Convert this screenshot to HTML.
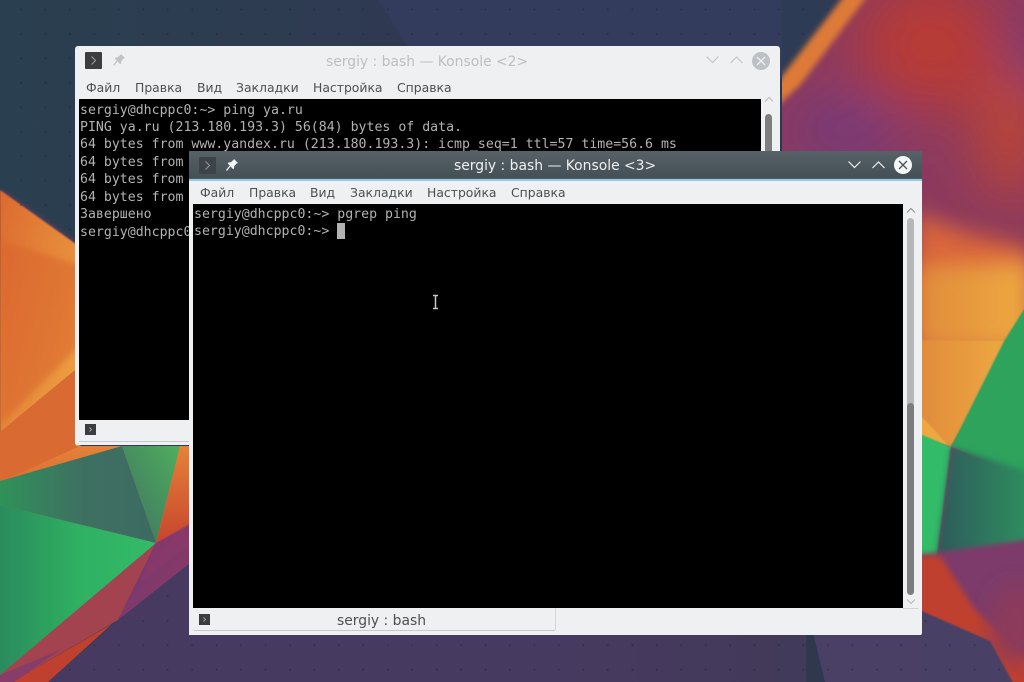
<!DOCTYPE html>
<html><head><meta charset="utf-8">
<style>
html,body{margin:0;padding:0;width:1024px;height:682px;overflow:hidden;background:#333a5a}
#bg{position:absolute;left:0;top:0}
.win{position:absolute;background:#eff0f1;overflow:hidden;filter:blur(.3px)}
.a{position:absolute;white-space:pre}
.m{font:12.4px/17px "DejaVu Sans",sans-serif;color:#4d4f50}
.t{font:13.23px/17.45px "DejaVu Sans Mono",monospace;color:#b2b2b2;white-space:pre;position:absolute}
.black{position:absolute;background:#000}
svg{position:absolute;overflow:visible}
</style></head><body>
<svg id="bg" width="1024" height="682" viewBox="0 0 1024 682" style="left:0;top:0">
<defs>
<linearGradient id="nv" x1="0" y1="0" x2="1" y2="0"><stop offset="0" stop-color="#2a3f50"/><stop offset=".4" stop-color="#2f3a52"/><stop offset=".8" stop-color="#2e3950"/></linearGradient>
<linearGradient id="org" x1="0" y1="0" x2="1" y2="1"><stop offset="0" stop-color="#dc6a30"/><stop offset=".6" stop-color="#e8913c"/><stop offset="1" stop-color="#f3ac48"/></linearGradient>
<linearGradient id="g1" x1="0" y1="0" x2="1" y2="0"><stop offset="0" stop-color="#2a8b5d"/><stop offset=".5" stop-color="#2fb062"/><stop offset="1" stop-color="#33bb68"/></linearGradient>
<linearGradient id="g2" x1="0" y1="0" x2="1" y2="0"><stop offset="0" stop-color="#2f9258"/><stop offset=".5" stop-color="#3e7162"/><stop offset="1" stop-color="#3d6a62"/></linearGradient>
<linearGradient id="g3" x1="1" y1="0" x2="0" y2="1"><stop offset="0" stop-color="#4fae5d"/><stop offset="1" stop-color="#3e6f62"/></linearGradient>
<linearGradient id="w" x1="0" y1="0" x2="0" y2="1"><stop offset="0" stop-color="#e58238"/><stop offset="1" stop-color="#c7452d"/></linearGradient>
<linearGradient id="dg" x1="0" y1="0" x2="1" y2="0"><stop offset="0" stop-color="#2f5a5c"/><stop offset="1" stop-color="#2f8f5e"/></linearGradient>
<linearGradient id="rp" x1="0" y1="0" x2="1" y2="1"><stop offset="0" stop-color="#693a80"/><stop offset="1" stop-color="#94385a"/></linearGradient>
<linearGradient id="ro" x1="0" y1="0" x2="1" y2="0"><stop offset="0" stop-color="#e08a3a"/><stop offset="1" stop-color="#eeaa42"/></linearGradient>
<linearGradient id="bot" x1="0" y1="0" x2="1" y2="0"><stop offset="0" stop-color="#473a60"/><stop offset="1" stop-color="#423a59"/></linearGradient>
<filter id="b30" x="-50%" y="-50%" width="200%" height="200%"><feGaussianBlur stdDeviation="28"/></filter>
<filter id="b12" x="-30%" y="-30%" width="160%" height="160%"><feGaussianBlur stdDeviation="11"/></filter>
<filter id="b3" x="-30%" y="-30%" width="160%" height="160%"><feGaussianBlur stdDeviation="3"/></filter>
<filter id="b1"><feGaussianBlur stdDeviation="0.7"/></filter>
<pattern id="dots" width="24.45" height="24.45" patternUnits="userSpaceOnUse"><circle cx="21" cy="9.5" r="0.9" fill="#1c2236" fill-opacity=".6"/></pattern>
<clipPath id="rightc"><polygon points="782,-5 1030,-5 1030,690 922,690 922,600 782,600"/></clipPath>
</defs>
<rect width="1024" height="682" fill="url(#nv)"/>
<polygon points="378,0 830,0 790,80 410,50" fill="#333c5c"/>
<polygon points="0,190 75,243 75,252 0,205" fill="#7e3a68" filter="url(#b3)"/>
<polygon points="0,190 80,247 80,450 0,482" fill="url(#org)" filter="url(#b1)"/>
<polygon points="0,240 80,265 80,345 0,425" fill="#d9632f" opacity=".55" filter="url(#b3)"/>
<polygon points="75,340 75,370 0,432 0,482 122,446 76,446" fill="#d96a31"/>
<polygon points="0,482 80,446 190,446 190,530 156,543 0,560" fill="url(#w)"/>
<polygon points="0,481 122,446 156,543 0,505" fill="url(#g2)"/>
<polygon points="122,446 180,446 156,543" fill="url(#g3)"/>
<polygon points="0,505 156,543 0,682" fill="url(#g1)"/>
<polygon points="180,446 190,446 190,525 157,543" fill="url(#w)"/>
<polygon points="189,563 118,620 48,682 560,682 560,600" fill="#473a60"/>
<rect x="550" y="600" width="256" height="82" fill="url(#bot)"/>
<polygon points="805,600 1024,600 1024,682 825,682" fill="#4a4065"/>
<polygon points="156,543 0,675 0,682 12,682 118,620" fill="#a2434f"/>
<polygon points="156,543 190,525 190,563 118,620" fill="url(#rp)"/>
<polygon points="156,543 190,523 190,545 140,582" fill="#8c3a68" opacity=".6"/>
<polygon points="112,624 48,682 12,682" fill="#bf402f"/>
<polygon points="60,650 0,675 0,682 14,682" fill="#7a3a74" opacity=".7"/>
<g clip-path="url(#rightc)">
<polygon points="840,-30 1060,-30 1060,640 782,640 782,100" fill="#8c3a5e"/>
<g filter="url(#b30)">
<ellipse cx="930" cy="45" rx="70" ry="65" fill="#b83a36"/>
<ellipse cx="1010" cy="130" rx="28" ry="70" fill="#c4462e"/>
<ellipse cx="1030" cy="55" rx="22" ry="28" fill="#6b3a80"/>
<ellipse cx="845" cy="130" rx="55" ry="22" fill="#6a3a86"/>
</g>
<polygon points="760,-30 835,-30 845,0 780,90 760,110" fill="#2f3a54" filter="url(#b3)"/>
<polygon points="845,-5 868,-5 800,85 775,108 775,85" fill="#dd7a38" filter="url(#b3)"/>
<polygon points="915,212 960,230 1030,248 1030,350 915,350" fill="#d9653a" filter="url(#b12)"/>
<polygon points="915,265 1030,262 1030,350 915,350" fill="url(#ro)" filter="url(#b12)"/>
<polygon points="915,340 1012,341 951,447 915,415" fill="url(#ro)" filter="url(#b1)"/>
<polygon points="915,410 951,447 915,435" fill="#eea840" filter="url(#b1)"/>
<polygon points="1004,341 1030,300 1030,480 951,447" fill="#2ea35c" filter="url(#b1)"/>
<polygon points="915,432 951,447 937,556 915,556" fill="#33bb68" filter="url(#b1)"/>
<polygon points="951,447 1030,472 1030,542 937,556" fill="url(#dg)" filter="url(#b3)"/>
<polygon points="915,556 1030,540 1030,690 915,690" fill="#7c3a6a" filter="url(#b3)"/>
<polygon points="915,556 940,556 975,610 1030,660 1030,690 1000,682 915,612" fill="#bf402f" filter="url(#b3)"/>
<ellipse cx="1015" cy="625" rx="25" ry="40" fill="#8c3a5a" filter="url(#b12)"/>
<polygon points="915,608 990,641 1017,690 915,690" fill="#4a4065" filter="url(#b1)"/>
</g>
<polygon points="0,0 835,0 780,90 780,150 189,150 75,250 0,190" fill="url(#dots)"/>
<polygon points="48,682 189,563 189,636 922,636 922,610 990,641 1017,682" fill="url(#dots)"/>
</svg>

<div class="win" style="left:75px;top:46px;width:705px;height:399px;border-radius:3px 3px 0 2px">
 <svg style="left:10px;top:6px" width="17" height="17" viewBox="0 0 17 17"><rect width="17" height="17" fill="#3b3d3f" rx="1"/><path d="M6.5 4.5l4 4-4 4" fill="none" stroke="#9a9da0" stroke-width="1.1"/></svg>
 <svg style="left:37px;top:7px" width="14" height="14" viewBox="0 0 14 14"><path d="M9 1l4 4-1.200.4-2.500 2.600-.3 2.500-1 .6L2.800 5.500l.6-1 2.500-.3L8.600 1.700z" fill="#bfc3c6"/><path d="M5 8L1.500 12.500" stroke="#bfc3c6" stroke-width="1.300"/></svg>
 <div class="a" style="left:251px;top:8px;font:13.9px/17px 'DejaVu Sans',sans-serif;color:#bcc0c3">sergiy : bash — Konsole &lt;2&gt;</div>
 <svg style="left:630px;top:9px" width="15" height="10" viewBox="0 0 15 10"><path d="M1.500 1.500l6 6 6-6" fill="none" stroke="#c0c4c7" stroke-width="1.100"/></svg>
 <svg style="left:654px;top:9px" width="15" height="10" viewBox="0 0 15 10"><path d="M1.500 8l6-6 6 6" fill="none" stroke="#c0c4c7" stroke-width="1.100"/></svg>
 <svg style="left:677px;top:6px" width="18" height="18" viewBox="0 0 18 18"><circle cx="9" cy="9" r="9" fill="#bdc1c4"/><path d="M5 5l8 8M13 5l-8 8" stroke="#eff0f1" stroke-width="1.300"/></svg>
 <div class="a m" style="left:11px;top:33px">Файл</div>
 <div class="a m" style="left:60px;top:33px">Правка</div>
 <div class="a m" style="left:122px;top:33px">Вид</div>
 <div class="a m" style="left:161px;top:33px">Закладки</div>
 <div class="a m" style="left:238px;top:33px">Настройка</div>
 <div class="a m" style="left:322px;top:33px">Справка</div>
 <div class="black" style="left:4px;top:53px;width:682px;height:321px"></div>
 <div class="t" style="left:5px;top:55.500px">sergiy@dhcppc0:~&gt; ping ya.ru
PING ya.ru (213.180.193.3) 56(84) bytes of data.
64 bytes from www.yandex.ru (213.180.193.3): icmp_seq=1 ttl=57 time=56.6 ms
64 bytes from
64 bytes from
64 bytes from
Завершено
sergiy@dhcppc0:~&gt;</div>
 <div class="a" style="left:690px;top:68px;width:7px;height:60px;background:#7c7e80;border-radius:4px 4px 0 0"></div>
 <svg style="left:689px;top:50px" width="10" height="7" viewBox="0 0 10 7"><path d="M1 5.500l4-4 4 4" fill="none" stroke="#b8bbbd" stroke-width="1"/></svg>
 <svg style="left:10px;top:378px" width="11" height="11" viewBox="0 0 11 11"><rect width="11" height="11" fill="#3b3d3f"/><path d="M4.500 3.500l2 2-2 2" fill="none" stroke="#9a9da0" stroke-width="1"/></svg>
 <div class="a" style="left:4px;top:395px;width:200px;height:1px;background:#c6cacc"></div>
</div>

<div class="win" style="left:189px;top:151px;width:733px;height:484px;border-radius:0 0 2px 0;">
 <div class="a" style="left:0;top:0;width:733px;height:28px;background:linear-gradient(#566168,#434e55)"></div>
 <div class="a" style="left:0;top:27px;width:733px;height:1px;background:#3f6478"></div>
 <div class="a" style="left:0;top:28px;width:733px;height:1.500px;background:#9cc6de"></div>
 <svg style="left:10px;top:6px" width="17" height="17" viewBox="0 0 17 17"><rect width="17" height="17" fill="#3e4347" rx="1"/><path d="M6.500 4.500l4 4-4 4" fill="none" stroke="#8f9497" stroke-width="1.100"/></svg>
 <svg style="left:36px;top:7px" width="14" height="14" viewBox="0 0 14 14"><path d="M9 1l4 4-1.200.4-2.500 2.600-.3 2.500-1 .6L2.800 5.500l.6-1 2.500-.3L8.600 1.700z" fill="#f4f5f5"/><path d="M5 8L1.500 12.500" stroke="#f4f5f5" stroke-width="1.300"/></svg>
 <div class="a" style="left:265px;top:7px;font:13.9px/17px 'DejaVu Sans',sans-serif;color:#eff0f1">sergiy : bash — Konsole &lt;3&gt;</div>
 <svg style="left:658px;top:9px" width="15" height="10" viewBox="0 0 15 10"><path d="M1.500 1.500l6 6 6-6" fill="none" stroke="#eff0f1" stroke-width="1.200"/></svg>
 <svg style="left:682px;top:9px" width="15" height="10" viewBox="0 0 15 10"><path d="M1.500 8l6-6 6 6" fill="none" stroke="#eff0f1" stroke-width="1.200"/></svg>
 <svg style="left:705px;top:5px" width="18" height="18" viewBox="0 0 18 18"><circle cx="9" cy="9" r="9" fill="#f6f7f7"/><path d="M5 5l8 8M13 5l-8 8" stroke="#4a5359" stroke-width="1.300"/></svg>
 <div class="a m" style="left:11px;top:33px">Файл</div>
 <div class="a m" style="left:60px;top:33px">Правка</div>
 <div class="a m" style="left:121px;top:33px">Вид</div>
 <div class="a m" style="left:161px;top:33px">Закладки</div>
 <div class="a m" style="left:238px;top:33px">Настройка</div>
 <div class="a m" style="left:322px;top:33px">Справка</div>
 <div class="black" style="left:4px;top:53px;width:710px;height:404px"></div>
 <div class="t" style="left:5px;top:54.500px">sergiy@dhcppc0:~&gt; pgrep ping
sergiy@dhcppc0:~&gt;</div>
 <div class="a" style="left:148px;top:72px;width:8px;height:16px;background:#b2b2b2"></div>
 <svg style="left:243px;top:143px" width="7" height="16" viewBox="0 0 7 16"><path d="M1 1.500h5M1 14.500h5M3.500 1.500v13" fill="none" stroke="#c8c8c8" stroke-width="1.500"/></svg>
 <svg style="left:717px;top:56px" width="10" height="7" viewBox="0 0 10 7"><path d="M1 5.500l4-4 4 4" fill="none" stroke="#8c9092" stroke-width="1.100"/></svg>
 <div class="a" style="left:718px;top:67px;width:7px;height:190px;background:#b5b7b8;border-radius:4px 4px 0 0"></div>
 <div class="a" style="left:718px;top:252px;width:7px;height:192px;background:#7b7d7f;border-radius:4px"></div>
 <svg style="left:717px;top:447px" width="10" height="7" viewBox="0 0 10 7"><path d="M1 1.500l4 4 4-4" fill="none" stroke="#b8bbbd" stroke-width="1"/></svg>
 <div class="a" style="left:714px;top:457px;width:15px;height:1px;background:#d0d3d5"></div>
 <div class="a" style="left:4px;top:457px;width:362px;height:22px;border-right:1px solid #d4d7d9;border-bottom:1px solid #c6cacc;border-radius:0 0 2px 2px"></div>
 <svg style="left:10px;top:463px" width="11" height="11" viewBox="0 0 11 11"><rect width="11" height="11" fill="#3b3d3f"/><path d="M4.500 3.500l2 2-2 2" fill="none" stroke="#9a9da0" stroke-width="1"/></svg>
 <div class="a" style="left:148px;top:462px;font:13.9px/17px 'DejaVu Sans',sans-serif;color:#4d4f50">sergiy : bash</div>
</div>
</body></html>
